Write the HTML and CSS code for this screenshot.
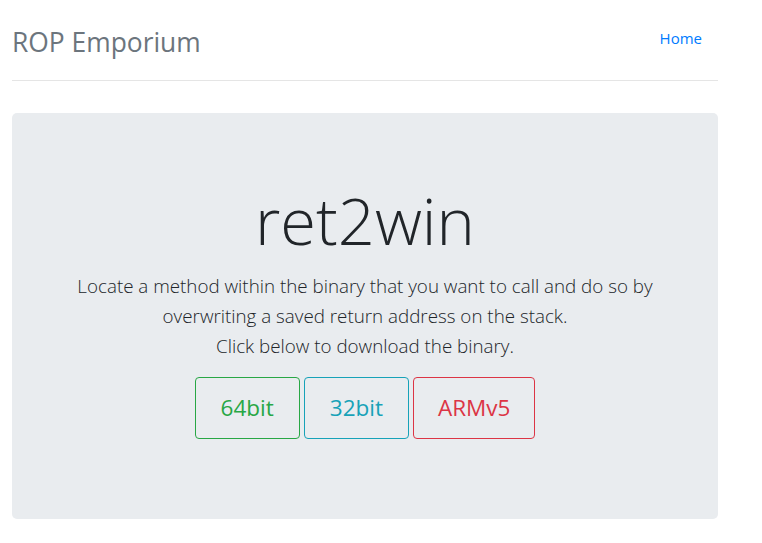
FILE: index.html
```html
<!DOCTYPE html>
<html lang="en">
<head>
<meta charset="utf-8">
<title>ROP Emporium - ret2win</title>
<link rel="stylesheet" href="styles.css">
</head>
<body>
<div class="page">
  <header class="header">
    <h3 class="brand">ROP Emporium</h3>
    <nav class="nav">
      <a class="nav-link" href="#">Home</a>
    </nav>
  </header>
  <main class="jumbotron">
    <h1 class="title">ret2win</h1>
    <p class="lead">Locate a method within the binary that you want to call and do so by<br>overwriting a saved return address on the stack.<br>Click below to download the binary.</p>
    <p class="buttons">
      <a class="btn btn-success" href="#">64bit</a>
      <a class="btn btn-info" href="#">32bit</a>
      <a class="btn btn-danger" href="#">ARMv5</a>
    </p>
  </main>
</div>
</body>
</html>
```
FILE: styles.css
```css
html, body {
  margin: 0;
  padding: 0;
  background: #fff;
}
body {
  font-family: "Open Sans", "Noto Sans", sans-serif;
  color: #212529;
  font-size: 16px;
}
.page {
  width: 706px;
  margin-left: 12px;
}
.header {
  display: flex;
  justify-content: space-between;
  align-items: flex-start;
  padding-top: 18px;
  padding-bottom: 14px;
  border-bottom: 1px solid #e5e5e5;
}
.brand {
  margin: 0;
  font-size: 26.4px;
  font-weight: 400;
  line-height: 48px;
  color: #6c757d;
}
.nav {
  display: flex;
}
.nav-link {
  display: block;
  padding: 8px 16px;
  line-height: 24px;
  font-size: 15px;
  color: #007bff;
  text-decoration: none;
}
.jumbotron {
  margin-top: 32px;
  background: #e9ecef;
  border-radius: 5px;
  padding: 64px 32px;
  text-align: center;
}
.title {
  margin: 0 0 8px;
  font-size: 65px;
  font-weight: 300;
  line-height: 86px;
}
.lead {
  margin: 0 0 16px;
  font-size: 18.8px;
  font-weight: 300;
  line-height: 30px;
}
.buttons {
  margin: 0 0 16px;
  display: flex;
  justify-content: center;
  gap: 4px;
}
.btn {
  display: block;
  padding: 13px 25px;
  font-size: 22.5px;
  line-height: 34px;
  border: 1px solid;
  border-radius: 4px;
  text-decoration: none;
  background: transparent;
}
.btn-danger { padding-left: 24px; padding-right: 24px; }
.btn-success { color: #28a745; border-color: #28a745; }
.btn-info { color: #17a2b8; border-color: #17a2b8; }
.btn-danger { color: #dc3545; border-color: #dc3545; }
```
